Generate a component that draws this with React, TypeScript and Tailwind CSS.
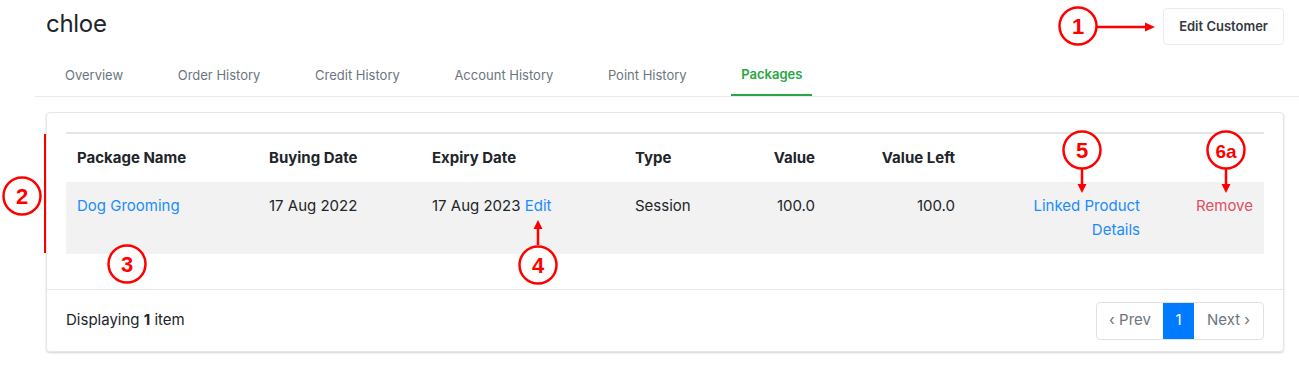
import React from "react";

const tabs = ["Overview", "Order History", "Credit History", "Account History", "Point History", "Packages"];

const Marker = ({ cx, cy, label }: { cx: number; cy: number; label: string }) => (
  <g>
    <circle cx={cx} cy={cy} r={18.5} fill="white" stroke="#ff0000" strokeWidth={2.5} />
    <text
      x={cx}
      y={cy + 8}
      textAnchor="middle"
      fill="#ff0000"
      fontSize={label.length > 1 ? 19 : 22}
      fontWeight={700}
      fontFamily="'Liberation Sans', Arial, sans-serif"
    >
      {label}
    </text>
  </g>
);

const Annotations = () => (
  <svg className="absolute left-0 top-0 pointer-events-none" width={1299} height={386}>
    {/* 1 -> edit customer */}
    <line x1={1097} y1={27} x2={1146} y2={27} stroke="#ff0000" strokeWidth={2.5} />
    <polygon points="1155,27 1145,22.5 1145,31.5" fill="#ff0000" />
    <Marker cx={1078} cy={26} label="1" />

    {/* 2 -> table bracket */}
    <line x1={45} y1={134} x2={45} y2={253} stroke="#ff0000" strokeWidth={2} />
    <Marker cx={22} cy={196} label="2" />

    <Marker cx={127} cy={264} label="3" />

    {/* 4 -> edit expiry */}
    <line x1={538} y1={245} x2={538} y2={227} stroke="#ff0000" strokeWidth={2.5} />
    <polygon points="538,220 533.5,229 542.5,229" fill="#ff0000" />
    <Marker cx={538} cy={265} label="4" />

    {/* 5 -> linked product */}
    <line x1={1082} y1={169} x2={1082} y2={186} stroke="#ff0000" strokeWidth={2.5} />
    <polygon points="1082,193 1077.5,184 1086.5,184" fill="#ff0000" />
    <Marker cx={1082} cy={150} label="5" />

    {/* 6a -> remove */}
    <line x1={1226} y1={169} x2={1226} y2={186} stroke="#ff0000" strokeWidth={2.5} />
    <polygon points="1226,193 1221.5,184 1230.5,184" fill="#ff0000" />
    <Marker cx={1226} cy={150} label="6a" />
  </svg>
);

export default function App() {
  return (
    <div
      className="relative w-[1299px] h-[386px] bg-white overflow-hidden text-[#212529]"
      style={{ fontFamily: "Inter, 'Noto Sans', sans-serif" }}
    >
      {/* HEADER */}
      <div className="flex justify-between items-start pt-[8px] pl-[46px] pr-[15px]">
        <h1 className="text-[24px] leading-[30px] mt-[1px] font-normal tracking-[-0.3px]">chloe</h1>
        <button className="h-[37px] px-[15px] border border-[#ebebeb] rounded-[4px] text-[13px] font-semibold text-[#343a40] bg-white">
          Edit Customer
        </button>
      </div>

      {/* TABS */}
      <div className="ml-[35px] mt-[9px] border-b border-[#e9ecef] flex pl-[20px] gap-[34.6px]">
        {tabs.map((t) => (
          <div
            key={t}
            className={
              t === "Packages"
                ? "px-[10px] h-[42px] pt-[2px] flex items-center text-[13px] font-semibold text-[#28a745] border-b-2 border-[#28a745] -mb-px"
                : "px-[10px] h-[42px] pt-[2px] flex items-center text-[13px] text-[#6c757d]"
            }
          >
            {t}
          </div>
        ))}
      </div>

      {/* CARD */}
      <div className="ml-[46px] mt-[15px] w-[1238px] border border-[#e6e6e6] rounded-[4px] shadow-[0_1px_2px_rgba(0,0,0,0.18)]">
        <div className="px-[19px] pt-[19px] pb-[35px]">
          <table className="w-[1198px] table-fixed border-t-2 border-[#e2e6ea] text-[15px] leading-[24px]">
            <colgroup>
              <col className="w-[192px]" />
              <col className="w-[163px]" />
              <col className="w-[203px]" />
              <col className="w-[102px]" />
              <col className="w-[100px]" />
              <col className="w-[140px]" />
              <col className="w-[185px]" />
              <col className="w-[113px]" />
            </colgroup>
            <thead>
              <tr className="font-bold">
                <th className="text-left px-[11px] py-[12px]">Package Name</th>
                <th className="text-left px-[11px] py-[12px]">Buying Date</th>
                <th className="text-left px-[11px] py-[12px]">Expiry Date</th>
                <th className="text-left px-[11px] py-[12px]">Type</th>
                <th className="text-right px-[11px] py-[12px]">Value</th>
                <th className="text-right px-[11px] py-[12px]">Value Left</th>
                <th className="px-[11px] py-[12px]"></th>
                <th className="px-[11px] py-[12px]"></th>
              </tr>
            </thead>
            <tbody>
              <tr className="bg-[#f2f2f2] align-top">
                <td className="px-[11px] py-[12px] text-[#1a8cff]">Dog Grooming</td>
                <td className="px-[11px] py-[12px]">17 Aug 2022</td>
                <td className="px-[11px] py-[12px]">
                  17 Aug 2023 <span className="text-[#1a8cff]">Edit</span>
                </td>
                <td className="px-[11px] py-[12px]">Session</td>
                <td className="px-[11px] py-[12px] text-right">100.0</td>
                <td className="px-[11px] py-[12px] text-right">100.0</td>
                <td className="px-[11px] py-[12px] text-right text-[#1a8cff]">
                  Linked Product
                  <br />
                  Details
                </td>
                <td className="px-[11px] py-[12px] text-right text-[#df5061]">Remove</td>
              </tr>
            </tbody>
          </table>
        </div>

        {/* FOOTER */}
        <div className="border-t border-[#e6e6e6] flex justify-between items-center px-[19px] h-[62px]">
          <p className="text-[15px]">
            Displaying <b>1</b> item
          </p>
          <div className="flex h-[38px] border border-[#dee2e6] rounded-[4px] text-[15px] text-[#6c757d] overflow-hidden">
            <span className="w-[66px] flex items-center justify-center">‹ Prev</span>
            <span className="w-[31px] flex items-center justify-center bg-[#007bff] text-white">1</span>
            <span className="w-[69px] flex items-center justify-center">Next ›</span>
          </div>
        </div>
      </div>

      <Annotations />
    </div>
  );
}
